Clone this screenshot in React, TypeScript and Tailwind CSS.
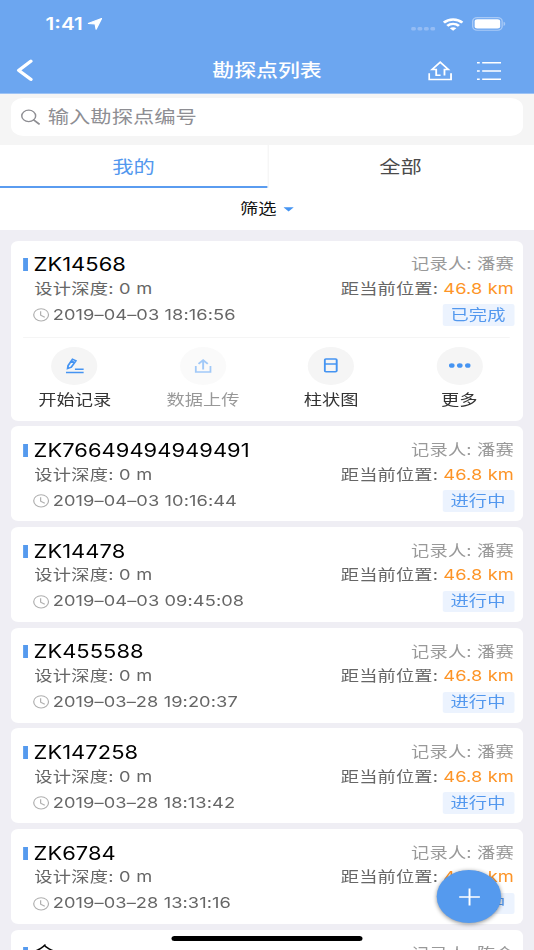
import { ReactNode } from "react";

type Point = {
  id: string;
  time: string;
  status: string;
  recorder: string;
  expanded?: boolean;
};

const points: Point[] = [
  {
    id: "ZK14568",
    time: "2019–04–03 18:16:56",
    status: "已完成",
    recorder: "潘赛",
    expanded: true,
  },
  { id: "ZK76649494949491", time: "2019–04–03 10:16:44", status: "进行中", recorder: "潘赛" },
  { id: "ZK14478", time: "2019–04–03 09:45:08", status: "进行中", recorder: "潘赛" },
  { id: "ZK455588", time: "2019–03–28 19:20:37", status: "进行中", recorder: "潘赛" },
  { id: "ZK147258", time: "2019–03–28 18:13:42", status: "进行中", recorder: "潘赛" },
  { id: "ZK6784", time: "2019–03–28 13:31:16", status: "进行中", recorder: "潘赛" },
  { id: "会", time: "2019–03–28 11:20:05", status: "进行中", recorder: "陈金" },
];

function StatusBar() {
  return (
    <div className="flex h-[48px] items-center justify-between pl-[37.5px] pr-[23px] text-white">
      <div className="flex items-center gap-[3.5px]">
        <span className="text-[17px] font-semibold leading-none">1:41</span>
        <svg width="12" height="12" viewBox="0 0 12 12" fill="currentColor" stroke="currentColor" strokeWidth="1" strokeLinejoin="round">
          <path d="M11.5 0.5 L7 11.2 L6.2 6 L0.5 5.4 Z" />
        </svg>
      </div>
      <div className="flex items-center">
        <svg className="mt-[9px]" width="20" height="4" viewBox="0 0 20 4" fill="#94bcf4">
          <rect x="0" y="0" width="3.8" height="3.6" rx="1.3" />
          <rect x="5.3" y="0" width="3.8" height="3.6" rx="1.3" />
          <rect x="10.6" y="0" width="3.8" height="3.6" rx="1.3" />
          <rect x="15.9" y="0" width="3.8" height="3.6" rx="1.3" />
        </svg>
        <svg className="ml-[6px]" width="17" height="13" viewBox="0 0 17 13" fill="none" stroke="currentColor" strokeWidth="2.4">
          <path d="M0.9 4.6 C5 0.4 12 0.4 16.1 4.6" />
          <path d="M3.7 7.8 C6.4 5.2 10.6 5.2 13.3 7.8" />
          <path d="M8.5 12.8 L5.8 10.3 C7.3 9 9.7 9 11.2 10.3 Z" fill="currentColor" stroke="none" />
        </svg>
        <svg className="ml-[7px]" width="28" height="14" viewBox="0 0 28 14">
          <rect x="0.6" y="0.6" width="24.2" height="12.6" rx="3.6" fill="none" stroke="#a9caf6" strokeWidth="1.1" />
          <rect x="2.2" y="2.3" width="21" height="9.2" rx="2.2" fill="#fff" />
          <path d="M26 4.8 C27.8 5.4 27.8 8.4 26 9 Z" fill="#a9caf6" />
        </svg>
      </div>
    </div>
  );
}

function NavBar() {
  return (
    <div className="grid h-[45px] grid-cols-3 items-center text-white">
      <svg className="ml-[13px]" width="15" height="23" viewBox="0 0 15 23" fill="none" stroke="currentColor" strokeWidth="3" strokeLinecap="round" strokeLinejoin="round">
        <path d="M12.4 2.2 L2.4 11.3 L12.4 20.4" />
      </svg>
      <h1 className="text-center text-[18px] font-medium leading-none">勘探点列表</h1>
      <div className="flex items-center justify-end gap-[20px] pr-[27px]">
        <svg width="20" height="20" viewBox="0 0 20 20" fill="none" stroke="currentColor" strokeWidth="1.5">
          <path d="M0.8 12.2 V18.6 H18.8 V12.2" />
          <path d="M13.4 14.4 V8.4 H16.6 L9.9 1.2 L3.2 8.4 H6.6 V14.2 H10.2" />
        </svg>
        <svg width="20" height="20" viewBox="0 0 20 20" fill="none" stroke="currentColor" strokeWidth="1.5">
          <path d="M0 1.8 H2.4 M4.4 1.8 H20 M0 10 H2.4 M4.4 10 H20 M0 18.2 H2.4 M4.4 18.2 H20" />
        </svg>
      </div>
    </div>
  );
}

function SearchBox() {
  return (
    <div className="h-[51px] shrink-0 bg-[#f5f5f5] px-[8.8px] pt-[4px]">
      <div className="flex h-[38px] items-center gap-[6.5px] rounded-[10px] bg-white pl-[8px] text-[#8e8e93]">
        <svg width="16" height="17" viewBox="0 0 16 17" fill="none" stroke="currentColor" strokeWidth="1.2" strokeLinecap="round">
          <circle cx="6.6" cy="6.9" r="5.7" />
          <path d="M10.8 11 L15 14.9" strokeWidth="1.7" />
        </svg>
        <span className="text-[17.5px] leading-none">输入勘探点编号</span>
      </div>
    </div>
  );
}

function Tabs() {
  return (
    <div className="grid h-[43px] shrink-0 grid-cols-2 bg-white text-center text-[17.5px] leading-[43px]">
      <div className="h-[43px] border-b-2 border-[#5a9cf0] text-[#5398ee]">我的</div>
      <div className="h-[43px] border-l border-[#f4f4f4] pr-[1px] text-[#4a4a4a]">全部</div>
    </div>
  );
}

function Action({ label, muted, children }: { label: string; muted?: boolean; children: ReactNode }) {
  return (
    <div className={muted ? "flex flex-col items-center opacity-50" : "flex flex-col items-center"}>
      <div className="flex h-[38px] w-[38px] items-center justify-center rounded-full bg-[#f5f5f5] text-[#4594f2]">
        {children}
      </div>
      <span className="mt-[5px] text-[15px] leading-[20px] text-[#333]">{label}</span>
    </div>
  );
}

function Actions() {
  return (
    <div>
      <div className="ml-[10px] mr-[11px] border-t border-[#f5f5f5]" />
      <div className="grid grid-cols-4 pt-[9px]">
        <Action label="开始记录">
          <svg width="15" height="16" viewBox="0 0 15 16" fill="none" stroke="currentColor" strokeWidth="1.5">
            <path d="M1.6 10.6 L2 7.6 L5.6 1.2 L8.4 2.8 L4.6 9.2 Z M4.6 3 L7.4 4.6" />
            <path d="M7.6 11.2 H14.8 M0.2 14.6 H14.8" />
          </svg>
        </Action>
        <Action label="数据上传" muted>
          <svg width="14" height="14" viewBox="0 0 14 14" fill="none" stroke="currentColor" strokeWidth="1.6">
            <path d="M0.9 7 V13 H13.1 V7 M7 10.6 V1.4 M3.2 4.8 L7 1.2 L10.8 4.8" />
          </svg>
        </Action>
        <Action label="柱状图">
          <svg width="12" height="15" viewBox="0 0 12 15" fill="none" stroke="currentColor" strokeWidth="1.6">
            <rect x="1" y="1" width="9.8" height="12.8" rx="1" />
            <path d="M1 6 H10.8" />
          </svg>
        </Action>
        <Action label="更多">
          <svg width="18" height="5" viewBox="0 0 18 5" fill="currentColor">
            <circle cx="2.4" cy="2.5" r="2.3" />
            <circle cx="9" cy="2.5" r="2.3" />
            <circle cx="15.6" cy="2.5" r="2.3" />
          </svg>
        </Action>
      </div>
    </div>
  );
}

function PointCard({ point }: { point: Point }) {
  return (
    <div className={point.expanded ? "h-[180px] shrink-0 rounded-[6px] bg-white" : "h-[95px] shrink-0 rounded-[6px] bg-white"}>
      <div className="h-[96px] pl-[10.4px] pr-[7.7px] pt-[12px] text-[15px] tracking-[0.1px] text-[#666]">
        <div className="flex h-[24px] items-center">
          <span className="h-[13px] w-[3.4px] bg-[#559aee]" />
          <span className="ml-[5px] text-[18px] tracking-[0.05px] text-black">{point.id}</span>
          <span className="ml-auto tracking-[0.15px] text-[#999]">记录人: {point.recorder}</span>
        </div>
        <div className="flex h-[25px] items-center justify-between pl-[9px]">
          <span className="tracking-[0.2px]">设计深度: 0 m</span>
          <span>
            距当前位置: <span className="text-[#fd9426]">46.8 km</span>
          </span>
        </div>
        <div className="flex h-[27px] items-center pl-[8px]">
          <svg width="14" height="14" viewBox="0 0 14 14" fill="none" stroke="#b0b0b0" strokeWidth="1">
            <circle cx="6.8" cy="6.8" r="6.1" />
            <path d="M6.4 3.2 V7.2 L9.8 9.2" />
          </svg>
          <span className="ml-[2.2px] tracking-[0.07px]">{point.time}</span>
          <span className="ml-auto flex h-[21.5px] w-[59px] items-center justify-center rounded-[2px] bg-[#ecf3fe] text-[#5398ee]">
            {point.status}
          </span>
        </div>
      </div>
      {point.expanded && <Actions />}
    </div>
  );
}

export default function App() {
  return (
    <div className="h-[950px] w-[534px] overflow-hidden bg-[#efeef4]">
      <div className="relative flex h-[950px] w-[439px] origin-top-left scale-x-[1.2164] flex-col overflow-hidden font-['Inter','Noto_Sans_CJK_SC',sans-serif]">
        <div className="shrink-0 border-b border-[#9dc3f5] bg-[#6ca6f0]">
          <StatusBar />
          <NavBar />
        </div>
        <SearchBox />
        <Tabs />
        <div className="flex h-[42px] shrink-0 items-center justify-center gap-[6px] bg-white pt-[1px] text-[15px] text-[#111]">
          筛选
          <svg width="8.5" height="5" viewBox="0 0 9 5" fill="#4594f2">
            <path d="M0 0 H9 L4.5 4.6 Z" />
          </svg>
        </div>
        <div className="flex flex-col gap-[5.7px] px-[8.8px] pt-[10.7px]">
          {points.map((point) => (
            <PointCard key={point.id} point={point} />
          ))}
        </div>

        <button className="absolute left-[359px] top-[870px] flex h-[53px] w-[53px] items-center justify-center rounded-full bg-[#559aee] shadow-[0_1px_4px_rgba(0,0,0,0.45)]">
          <svg width="18" height="18" viewBox="0 0 18 18" fill="none" stroke="#fff" strokeWidth="1.6">
            <path d="M9 0.5 V17.5 M0.5 9 H17.5" />
          </svg>
        </button>
        <div className="absolute left-[141px] top-[936px] h-[5px] w-[157px] rounded-full bg-black" />
      </div>
    </div>
  );
}
